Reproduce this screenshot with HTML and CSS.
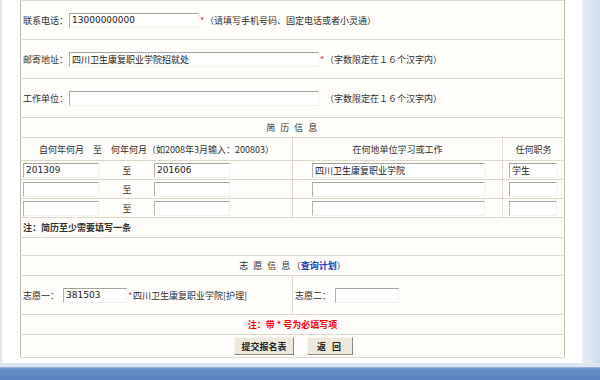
FILE: index.html
```html
<!DOCTYPE html>
<html lang="zh-CN">
<head>
    <meta charset="UTF-8">
    <title>网上报名</title>
    <link rel="stylesheet" href="styles.css">
</head>
<body>

<div class="page">
    <div class="main">
        <table class="form">
            <colgroup>
                <col class="col-a">
                <col class="col-b">
                <col class="col-c">
            </colgroup>

            <!-- 联系方式 -->
            <tr class="tall">
                <td colspan="3">
                    <div class="line">
                        <span class="lbl">联系电话：</span>
                        <input class="txt w-phone" type="text" value="13000000000">
                        <span class="star">*</span><span>（请填写手机号码、固定电话或者小灵通）</span>
                    </div>
                </td>
            </tr>
            <tr class="tall">
                <td colspan="3">
                    <div class="line">
                        <span class="lbl">邮寄地址：</span>
                        <input class="txt w-long" type="text" value="四川卫生康复职业学院招就处">
                        <span class="star">*</span><span>（字数限定在１６个汉字内）</span>
                    </div>
                </td>
            </tr>
            <tr class="tall">
                <td colspan="3">
                    <div class="line">
                        <span class="lbl">工作单位：</span>
                        <input class="txt w-long" type="text" value="">
                        <span class="nostar"></span><span>（字数限定在１６个汉字内）</span>
                    </div>
                </td>
            </tr>

            <!-- 简历信息 -->
            <tr class="title">
                <td colspan="3" class="spaced">简 历 信 息</td>
            </tr>
            <tr class="head">
                <td class="c">自何年何月　至　何年何月（如2008年3月输入：200803）</td>
                <td class="c">在何地单位学习或工作</td>
                <td class="c">任何职务</td>
            </tr>
            <tr class="resume">
                <td>
                    <div class="span">
                        <input class="txt w-date" type="text" value="201309">
                        <span class="to">至</span>
                        <input class="txt w-date" type="text" value="201606">
                    </div>
                </td>
                <td><input class="txt w-place" type="text" value="四川卫生康复职业学院"></td>
                <td><input class="txt w-job" type="text" value="学生"></td>
            </tr>
            <tr class="resume">
                <td>
                    <div class="span">
                        <input class="txt w-date" type="text">
                        <span class="to">至</span>
                        <input class="txt w-date" type="text">
                    </div>
                </td>
                <td><input class="txt w-place" type="text"></td>
                <td><input class="txt w-job" type="text"></td>
            </tr>
            <tr class="resume">
                <td>
                    <div class="span">
                        <input class="txt w-date" type="text">
                        <span class="to">至</span>
                        <input class="txt w-date" type="text">
                    </div>
                </td>
                <td><input class="txt w-place" type="text"></td>
                <td><input class="txt w-job" type="text"></td>
            </tr>
            <tr class="title">
                <td colspan="3" class="note">注：简历至少需要填写一条</td>
            </tr>
            <tr class="blank">
                <td colspan="3"></td>
            </tr>

            <!-- 志愿信息 -->
            <tr class="title">
                <td colspan="3"><span class="spaced">志 愿 信 息</span>（<a href="#">查询计划</a>）</td>
            </tr>
            <tr class="tall">
                <td>
                    <div class="line">
                        <span class="lbl-v">志愿一：</span>
                        <input class="txt w-code" type="text" value="381503">
                        <span class="star">*</span><span>四川卫生康复职业学院[护理]</span>
                    </div>
                </td>
                <td colspan="2">
                    <div class="line">
                        <span class="lbl-v">志愿二：</span>
                        <input class="txt w-code" type="text">
                    </div>
                </td>
            </tr>
            <tr class="title">
                <td colspan="3" class="warn">注：带 * 号为必填写项</td>
            </tr>
            <tr class="btns">
                <td colspan="3">
                    <div class="actions">
                        <button class="btn btn-submit" type="button">提交报名表</button>
                        <button class="btn btn-back" type="button">返 回</button>
                    </div>
                </td>
            </tr>
        </table>
    </div>
    <div class="side"></div>
</div>
<div class="foot-edge"></div>
<div class="foot"></div>

</body>
</html>
```

FILE: styles.css
```css
body { margin: 0; background-color: #dde8f3; font-family: "Noto Sans CJK SC", "DejaVu Sans", sans-serif; font-size: 9px; color: #2e2e2e; }
.page { display: flex; height: 363px; }
.main { width: 580px; margin-left: 2px; background-color: #fff; padding: 0 0 0 18px; box-sizing: border-box; }
.side { flex: 1; background: linear-gradient(to right, #e6eef6, #cfdff0); }
.foot-edge { height: 4px; background-color: #dce6f1; }
.foot { height: 13px; background: linear-gradient(to bottom, #9fb8dc 0, #6a8fc6 2px, #5a82bd 100%); }

.form { width: 544px; border-collapse: collapse; border: 1px solid #bdb9ab; border-top: 1px solid #dcd8ca; table-layout: fixed; }
.form td { border-bottom: 1px solid #dcd8ca; padding: 0 2px; background-color: #fffefb; vertical-align: middle; white-space: nowrap; }
.col-a { width: 272px; }
.col-b { width: 210px; }
.col-c { width: 62px; }

.tall td { height: 38px; }
.title td { height: 19px; }
.head td { height: 22px; }
.resume td { height: 18px; }
.blank td { height: 17px; }
.btns td { height: 22px; }
.head td + td, .resume td + td, .tall td + td { border-left: 1px solid #dcd8ca; }
.title td { text-align: center; }
.c { text-align: center; }
.spaced { letter-spacing: 1.5px; }

.line { display: flex; align-items: center; }
.lbl { width: 46px; }
.lbl-v { width: 40px; }
.star { color: #d8345a; width: 6px; text-align: center; font-size: 9px; }
.nostar { width: 6px; }

.txt { box-sizing: border-box; height: 15px; padding: 0 2px; font-family: "DejaVu Sans", "Noto Sans CJK SC", sans-serif; font-size: 9px; color: #222; background-color: #fff; border: 1px solid #f2f1ec; border-top-color: #a4a29c; border-left-color: #b4b2ac; outline: none; }
.w-phone { width: 130px; }
.w-long { width: 250px; }
.w-date { width: 76px; }
.w-place { width: 173px; margin-left: 17px; }
.w-job { width: 48px; margin-left: 4px; }
.w-code { width: 64px; }

.span { display: flex; align-items: center; }
.to { width: 54px; text-align: center; margin-left: 1px; }

.note { text-align: left !important; font-weight: bold; }
.warn { color: #f00; font-weight: bold; }
a { color: #1a3fc0; text-decoration: none; font-weight: bold; }

.actions { display: flex; justify-content: center; gap: 13px; padding-left: 2px; }
.btn { box-sizing: border-box; height: 18px; padding: 0; font-family: "Noto Sans CJK SC", sans-serif; font-size: 9px; font-weight: bold; color: #222; background-color: #ece9dc; border: 1px solid #8a877c; border-top-color: #f6f4ec; border-left-color: #f6f4ec; }
.btn-submit { width: 60px; }
.btn-back { width: 46px; letter-spacing: 2px; }
```
